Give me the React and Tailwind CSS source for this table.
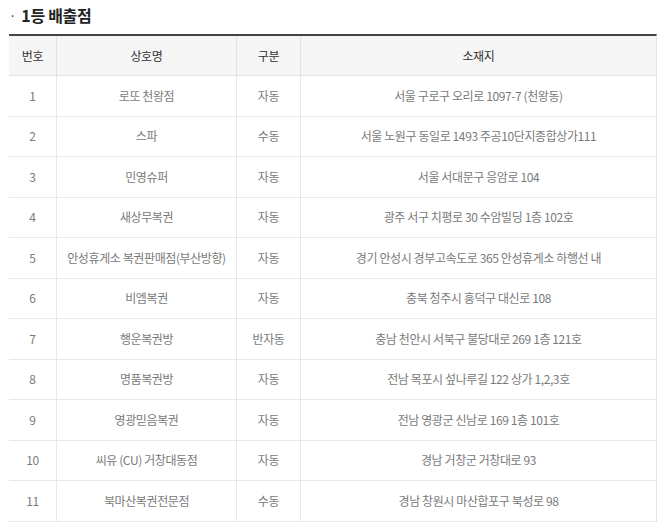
import React from 'react'

const rows = [
  ['1', '로또 천왕점', '자동', '서울 구로구 오리로 1097-7 (천왕동)'],
  ['2', '스파', '수동', '서울 노원구 동일로 1493 주공10단지종합상가111'],
  ['3', '민영슈퍼', '자동', '서울 서대문구 응암로 104'],
  ['4', '새상무복권', '자동', '광주 서구 치평로 30 수암빌딩 1층 102호'],
  ['5', '안성휴게소 복권판매점(부산방향)', '자동', '경기 안성시 경부고속도로 365 안성휴게소 하행선 내'],
  ['6', '비엠복권', '자동', '충북 청주시 흥덕구 대신로 108'],
  ['7', '행운복권방', '반자동', '충남 천안시 서북구 불당대로 269 1층 121호'],
  ['8', '명품복권방', '자동', '전남 목포시 섶나루길 122 상가 1,2,3호'],
  ['9', '영광믿음복권', '자동', '전남 영광군 신남로 169 1층 101호'],
  ['10', '씨유 (CU) 거창대동점', '자동', '경남 거창군 거창대로 93'],
  ['11', '북마산복권전문점', '수동', '경남 창원시 마산합포구 북성로 98'],
]

const cols = 'grid grid-cols-[48px_180px_64px_355px]'

const App = () => {
  return (
    <div className="w-[658px] h-[523px] bg-white overflow-hidden font-['Noto_Sans_CJK_KR','Noto_Sans',sans-serif]">
      {/* Title */}
      <div className="flex items-center h-[34px] pl-[9px] pb-[5px]">
        <span className="text-[#333] text-[13px] mr-[5px] mt-[2px]">·</span>
        <h2 className="text-[16px] font-bold text-[#222] tracking-[-0.3px]">1등 배출점</h2>
      </div>

      {/* Table */}
      <div className="ml-[9px] w-[648px] border-t-2 border-[#444] border-r border-r-[#e3e3e3]">
        <div className={`${cols} h-[40px] bg-[#f5f5f5] border-b border-[#e3e3e3] text-[12px] text-[#333] tracking-[-0.3px]`}>
          <div className="flex items-center justify-center border-r border-[#e3e3e3]">번호</div>
          <div className="flex items-center justify-center border-r border-[#e3e3e3]">상호명</div>
          <div className="flex items-center justify-center border-r border-[#e3e3e3]">구분</div>
          <div className="flex items-center justify-center">소재지</div>
        </div>
        {rows.map((r) => (
          <div
            key={r[0]}
            className={`${cols} h-[40.5px] border-b border-[#e8e8e8] text-[12px] text-[#7a7a7a] tracking-[-0.4px]`}
          >
            <div className="flex items-center justify-center border-r border-[#e8e8e8]">{r[0]}</div>
            <div className="flex items-center justify-center border-r border-[#e8e8e8]">{r[1]}</div>
            <div className="flex items-center justify-center border-r border-[#e8e8e8]">{r[2]}</div>
            <div className="flex items-center justify-center">{r[3]}</div>
          </div>
        ))}
      </div>
    </div>
  )
}

export default App
